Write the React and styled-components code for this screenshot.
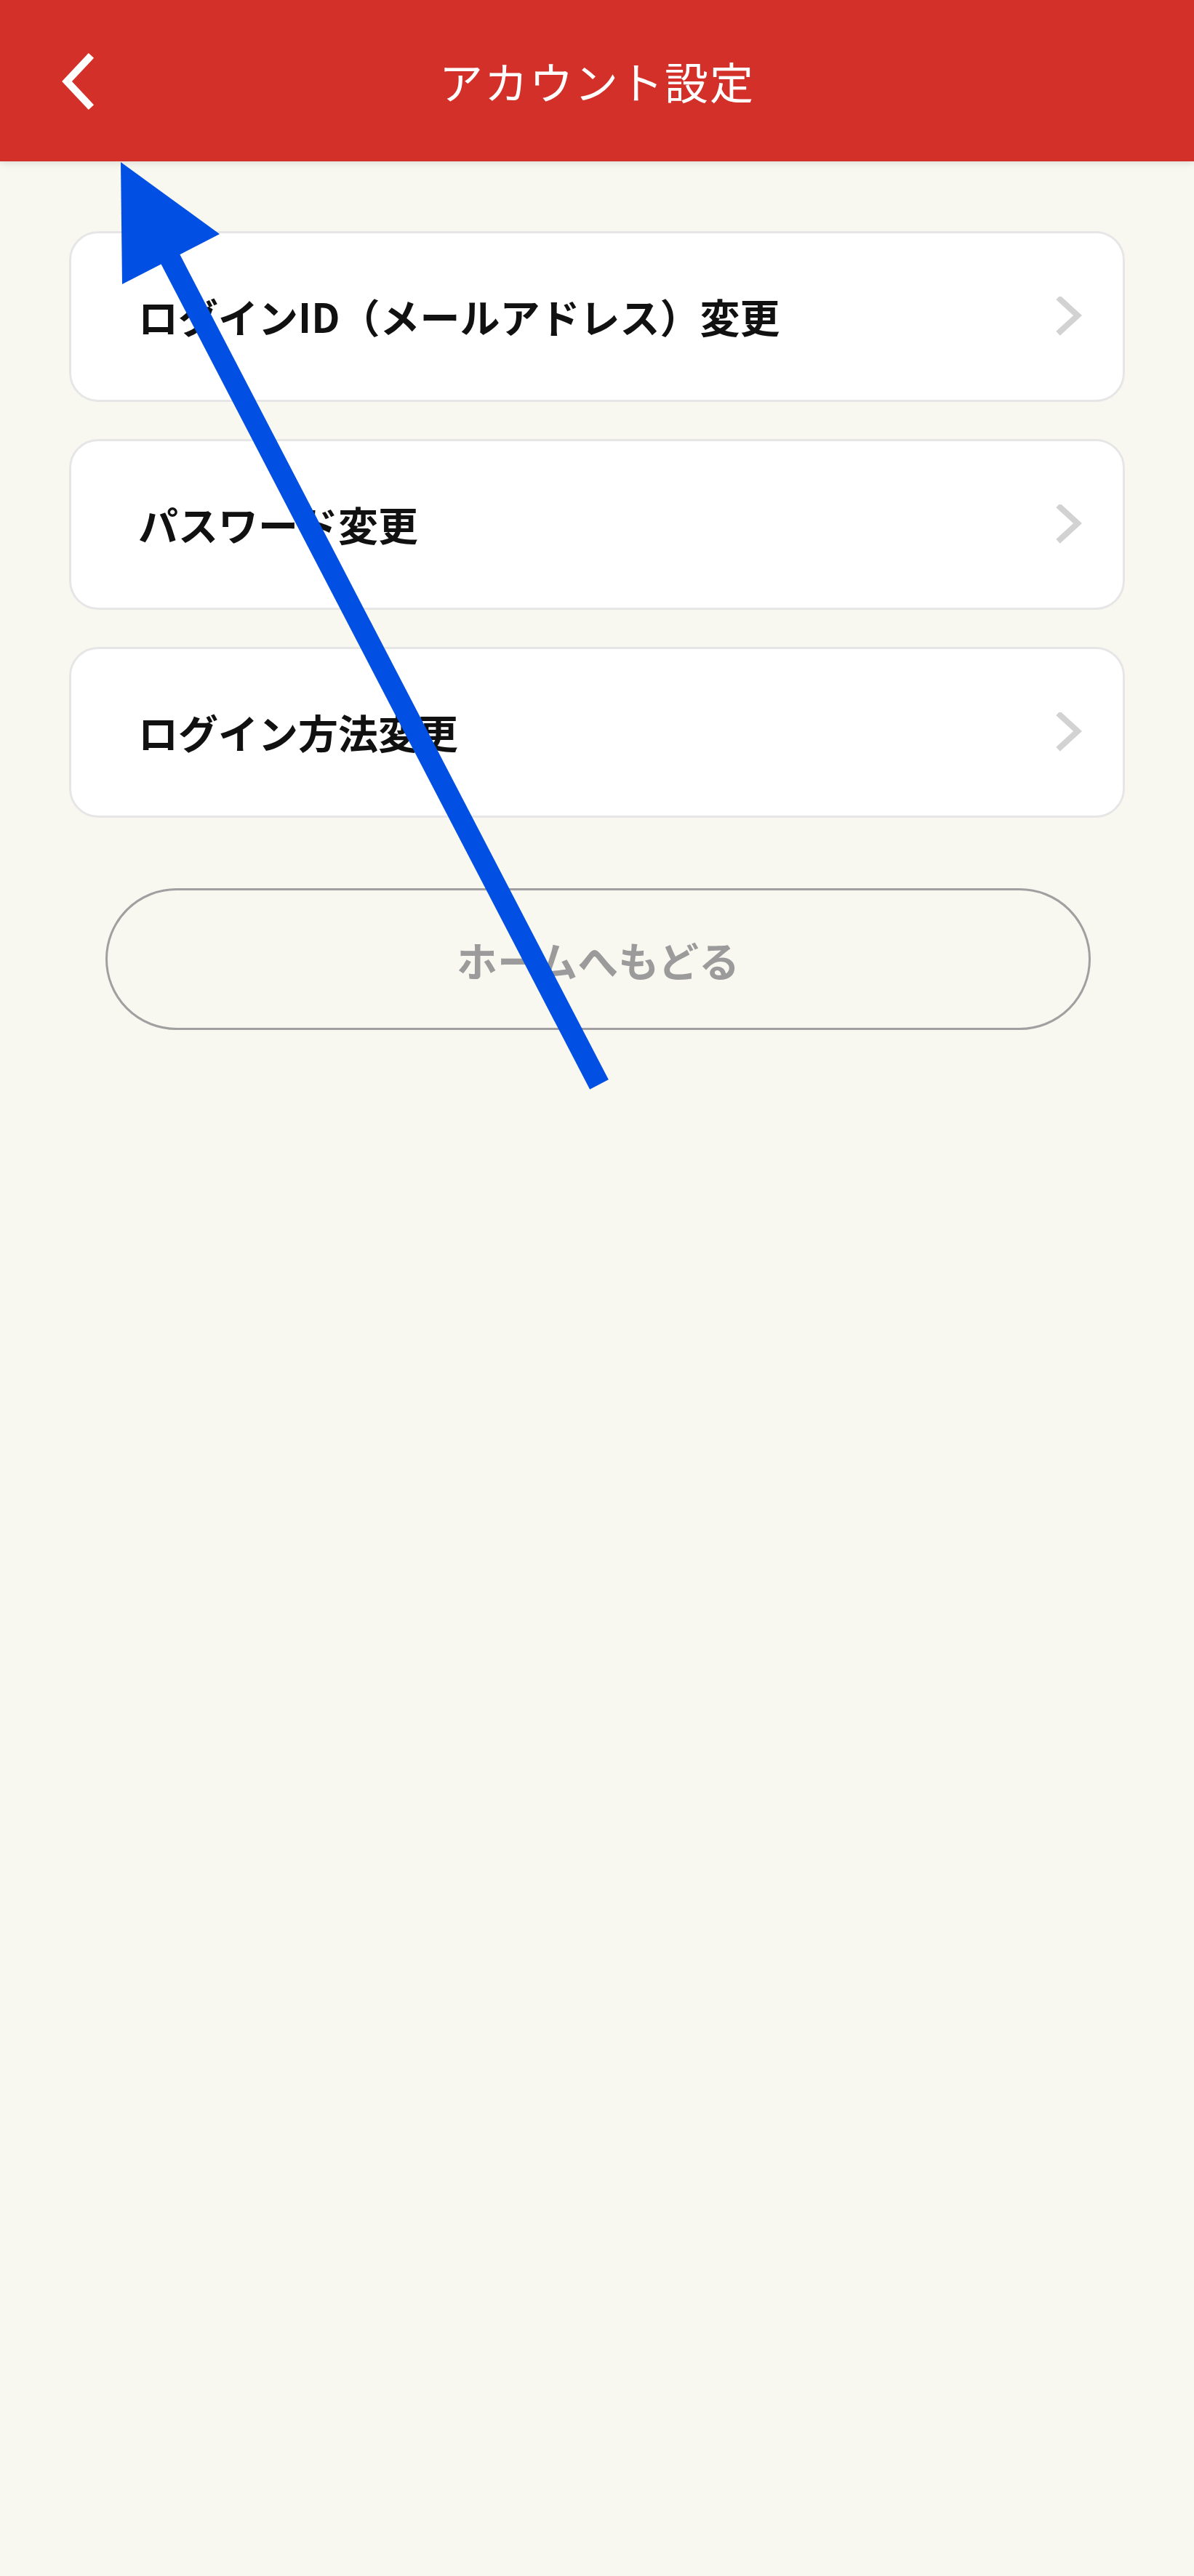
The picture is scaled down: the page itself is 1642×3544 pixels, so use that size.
import React from 'react'
import styled, { createGlobalStyle } from 'styled-components'

const GlobalStyle = createGlobalStyle`
  html, body {
    margin: 0;
    padding: 0;
    background: #f9f8f0;
  }
  body {
    font-family: "Noto Sans CJK JP", "Noto Sans", sans-serif;
  }
`;

const menuItems = [
  { id: 'login-id', label: 'ログインID（メールアドレス）変更' },
  { id: 'password', label: 'パスワード変更' },
  { id: 'login-method', label: 'ログイン方法変更' },
];

export default function App() {
  return (
    <Page>
      <GlobalStyle />
      <Header>
        <BackButton aria-label="戻る">
          <svg width="60" height="80" viewBox="0 0 60 80">
            <polyline points="38,8 8,40 38,72" fill="none" stroke="#fff" strokeWidth="10" strokeLinecap="square" />
          </svg>
        </BackButton>
        <Title>アカウント設定</Title>
      </Header>

      <Main>
        <MenuList>
          {menuItems.map(item => (
            <MenuCard key={item.id}>
              <MenuLabel>{item.label}</MenuLabel>
              <Chevron viewBox="0 0 40 56">
                <polyline points="6,4 30,26 6,48" fill="none" stroke="#d2d2d2" strokeWidth="8" strokeLinecap="square" />
              </Chevron>
            </MenuCard>
          ))}
        </MenuList>

        <HomeButton>ホームへもどる</HomeButton>
      </Main>

      {/* annotation arrow drawn over the screenshot */}
      <Annotation viewBox="0 0 1642 3544">
        <line x1="824" y1="1492" x2="232" y2="352" stroke="#0250e3" strokeWidth="29" />
        <polygon points="166,223 302,322 168,391" fill="#0250e3" />
      </Annotation>
    </Page>
  )
}

const Page = styled.div`
  position: relative;
  width: 1642px;
  min-height: 3544px;
  background: #f9f8f0;
`;

const Header = styled.header`
  position: relative;
  height: 222px;
  background: #d4302a;
  display: flex;
  align-items: center;
  justify-content: center;
  box-shadow: 0 2px 10px rgba(0, 0, 0, 0.12);
`;

const BackButton = styled.button`
  position: absolute;
  left: 84px;
  top: 72px;
  width: 60px;
  height: 80px;
  padding: 0;
  border: none;
  background: transparent;
  display: flex;
`;

const Title = styled.h1`
  margin: 0;
  color: #fff;
  font-size: 60px;
  font-weight: 400;
  letter-spacing: 2px;
  line-height: 1;
`;

const Main = styled.main`
  padding: 96px 95px 0;
  display: flex;
  flex-direction: column;
`;

const MenuList = styled.div`
  display: flex;
  flex-direction: column;
  gap: 51px;
`;

const MenuCard = styled.div`
  box-sizing: border-box;
  height: 235px;
  background: #fff;
  border: 3px solid #e6e6e6;
  border-radius: 40px;
  display: flex;
  align-items: center;
  justify-content: space-between;
  padding: 0 52px 0 92px;
`;

const MenuLabel = styled.span`
  font-size: 55px;
  font-weight: 700;
  color: #111;
  line-height: 1;
  margin-top: -2px;
`;

const Chevron = styled.svg`
  width: 40px;
  height: 56px;
`;

const HomeButton = styled.button`
  box-sizing: border-box;
  margin: 97px 47px 0 50px;
  height: 195px;
  border: 3px solid #a0a0a0;
  border-radius: 98px;
  background: transparent;
  font-family: "Noto Sans CJK JP", "Noto Sans", sans-serif;
  font-size: 56px;
  font-weight: 700;
  color: #9b9b9b;
`;

const Annotation = styled.svg`
  position: absolute;
  top: 0;
  left: 0;
  width: 1642px;
  height: 3544px;
  pointer-events: none;
`;
